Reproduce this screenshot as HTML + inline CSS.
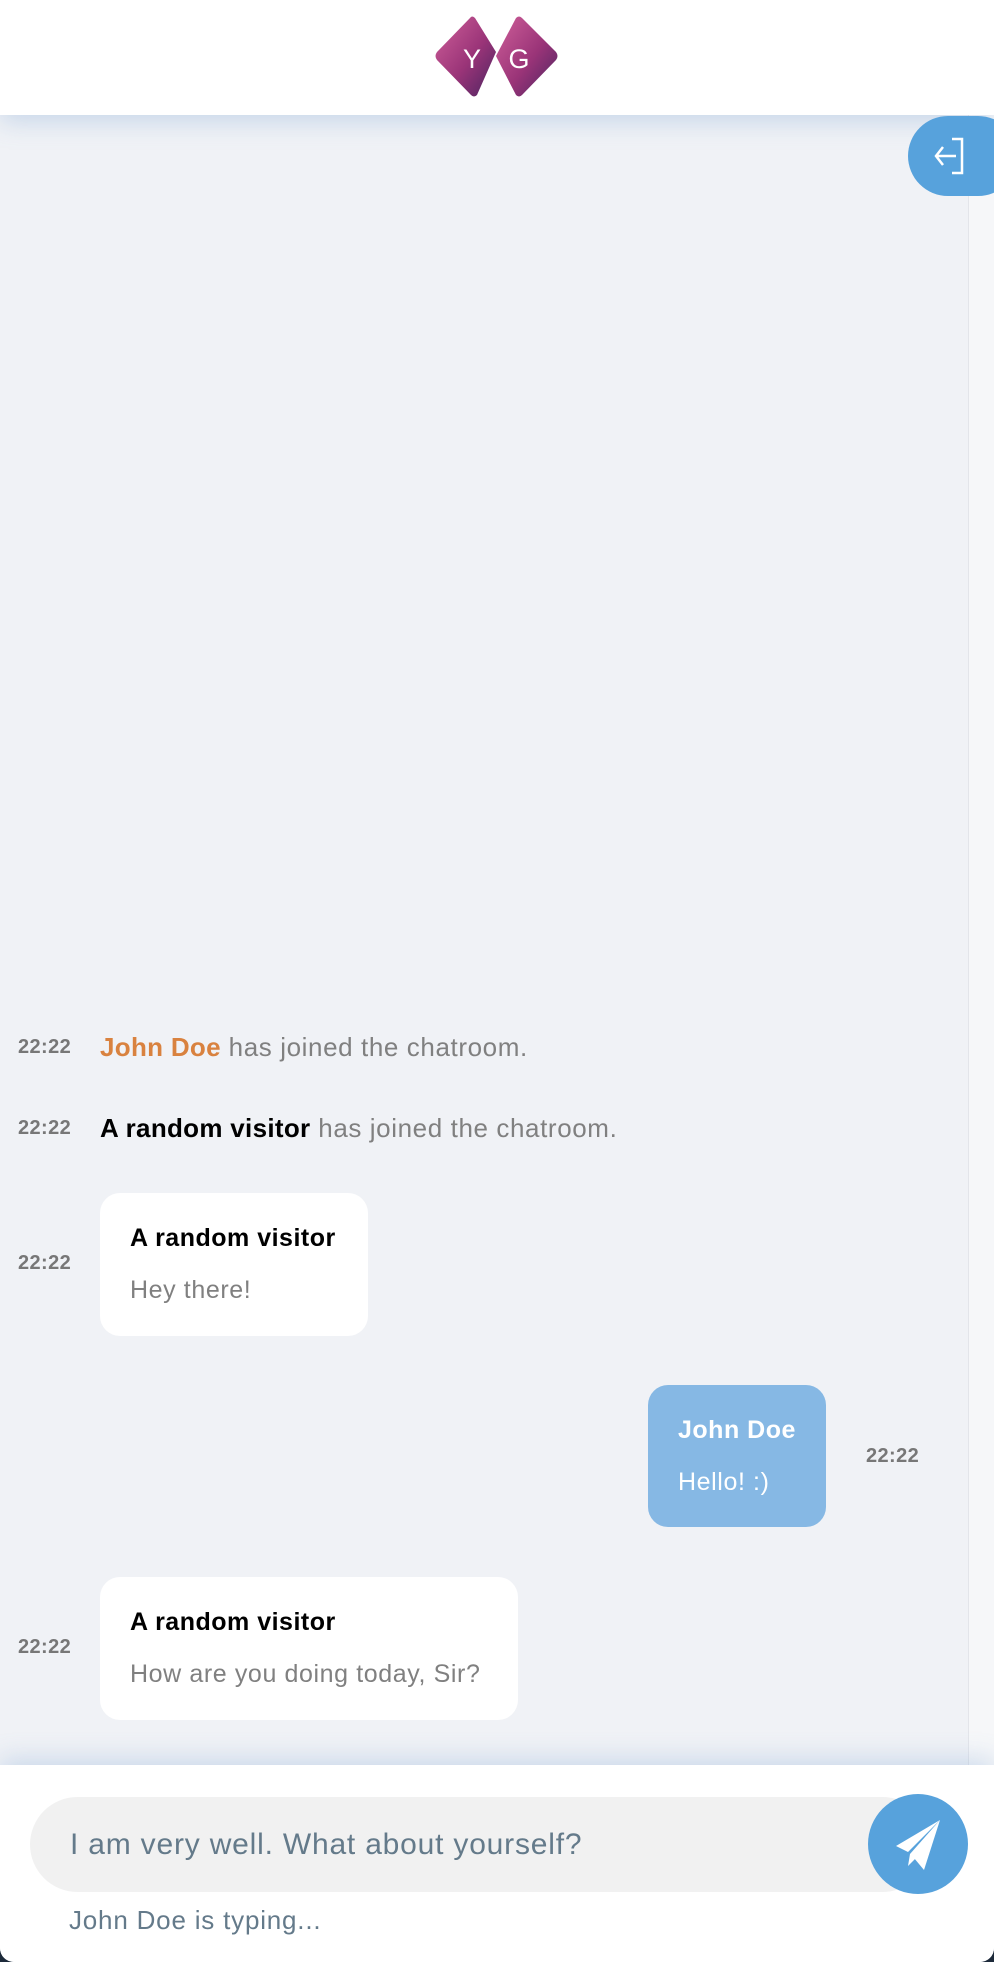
<!DOCTYPE html>
<html><head><meta charset="utf-8"><style>
*{margin:0;padding:0;box-sizing:border-box}
body{width:994px;height:1962px;background:#1d2a3a;font-family:"Liberation Sans",sans-serif;position:relative;overflow:hidden}
.page{position:absolute;left:0;top:0;width:994px;height:1962px;background:#f0f2f6;border-radius:0 0 14px 14px;overflow:hidden}
.hdr{position:absolute;left:0;top:0;width:994px;height:115px;background:#fff;box-shadow:0 6px 24px rgba(120,160,210,.35);z-index:2}
.sb{position:absolute;left:968px;top:115px;width:26px;height:1650px;background:#f6f7f9;border-left:1px solid #e3e5ea}
.logout{position:absolute;left:908px;top:116px;width:110px;height:80px;border-radius:40px;background:#57a2dc;z-index:3}
.t{position:absolute;font-weight:bold;font-size:20px;color:#777;letter-spacing:0.4px}
.sys{position:absolute;left:100px;font-size:26px;color:#808080;letter-spacing:0.6px}
.sys b{color:#000;font-weight:700;letter-spacing:0.3px}
.bub{position:absolute;background:#fff;border-radius:20px}
.bub .n{position:absolute;left:30px;font-weight:bold;font-size:25px;color:#000;letter-spacing:0.5px}
.bub .m{position:absolute;left:30px;font-size:25px;color:#808080;letter-spacing:0.6px}
.foot{position:absolute;left:0;top:1765px;width:994px;height:197px;background:#fff;box-shadow:0 -6px 24px rgba(120,160,210,.3)}
.inp{position:absolute;left:30px;top:32px;width:900px;height:95px;border-radius:48px;background:#f1f1f1;color:#647a8a;font-size:30px;padding-left:40px;line-height:95px;letter-spacing:0.8px}
.send{position:absolute;left:868px;top:29px;width:100px;height:100px;border-radius:50%;background:#57a2dc}
.typ{position:absolute;left:69px;top:140px;font-size:26px;color:#647a8a;letter-spacing:0.8px}
</style></head><body><div class="page">
<div class="hdr">
<svg style="position:absolute;left:434px;top:15px" width="126" height="82" viewBox="0 0 126 82">
<defs><linearGradient id="g" x1="0" y1="0" x2="1" y2="1"><stop offset="0" stop-color="#d0609a"/><stop offset=".55" stop-color="#9a3478"/><stop offset="1" stop-color="#4a2460"/></linearGradient></defs>
<path d="M36 3 Q38 0 41 3 L62 37 L43 80 Q40 83 37 80 L3 45 Q0 41 3 37 Z" fill="url(#g)"/>
<path d="M82 3 Q85 0 88 3 L122 37 Q125 41 122 45 L88 80 Q85 83 82 80 L64 45 L62 41 Z" fill="url(#g)"/>
<text x="38" y="53" font-family="Liberation Sans" font-size="27" fill="#fff" text-anchor="middle">Y</text>
<text x="85" y="53" font-family="Liberation Sans" font-size="27" fill="#fff" text-anchor="middle">G</text>
</svg></div>
<div class="sb"></div>
<div class="logout"><svg style="position:absolute;left:18px;top:20px" width="44" height="40" viewBox="0 0 44 40" fill="none" stroke="#fff" stroke-width="2.5"><path d="M26 3h10v34H26"/><path d="M30 20H10M17 11l-7 9 7 9"/></svg></div>

<div class="t" style="left:18px;top:1036px">22:22</div>
<div class="sys" style="top:1032px"><b style="color:#d9823f">John Doe</b> has joined the chatroom.</div>
<div class="t" style="left:18px;top:1117px">22:22</div>
<div class="sys" style="top:1113px"><b>A random visitor</b> has joined the chatroom.</div>

<div class="t" style="left:18px;top:1252px">22:22</div>
<div class="bub" style="left:100px;top:1193px;width:268px;height:143px"><div class="n" style="top:31px">A random visitor</div><div class="m" style="top:83px">Hey there!</div></div>

<div class="bub" style="left:648px;top:1385px;width:178px;height:142px;background:#86b8e4"><div class="n" style="top:31px;color:#fff">John Doe</div><div class="m" style="top:83px;color:#fff">Hello! :)</div></div>
<div class="t" style="left:866px;top:1445px">22:22</div>

<div class="t" style="left:18px;top:1636px">22:22</div>
<div class="bub" style="left:100px;top:1577px;width:418px;height:143px"><div class="n" style="top:31px">A random visitor</div><div class="m" style="top:83px">How are you doing today, Sir?</div></div>

<div class="foot">
<div class="inp">I am very well. What about yourself?</div>
<div class="send"><svg style="position:absolute;left:22px;top:22px" width="56" height="56" viewBox="0 0 56 56"><path d="M50 4 L6 30 L18 36 Z" fill="#fff"/><path d="M50 4 L20 38 L18 50 L26 42 Z" fill="#fff"/><path d="M50 4 L24 42 L34 54 Z" fill="#fff"/></svg></div>
<div class="typ">John Doe is typing...</div>
</div>
</div></body></html>
